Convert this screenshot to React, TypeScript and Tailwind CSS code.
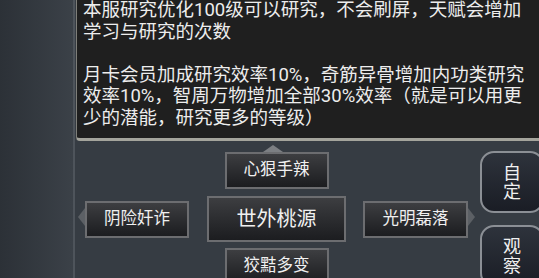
import React from "react";

const font = "font-['Roboto','Noto_Sans_CJK_SC',sans-serif]";

function Btn({ label, className = "" }: { label: string; className?: string }) {
  return (
    <div
      className={`relative flex items-center justify-center border-2 border-[#6c6d70] bg-gradient-to-b from-[#3d3e41] to-[#1c1d20] text-[#f0f0f0] ${className}`}
    >
      {label}
    </div>
  );
}

export default function App() {
  return (
    <div className={`w-[539px] h-[278px] flex overflow-hidden bg-[#363c43] ${font}`}>
      <div className="w-[73px] h-full shrink-0 bg-gradient-to-r from-[#2c3137] to-[#3b4148]" />
      <div className="w-[2px] h-full shrink-0 bg-[#4e545b]" />
      <div className="flex-1 flex flex-col min-w-0">
        <div className="ml-[1px] h-[141px] shrink-0 bg-[#1f1f1f] border-l border-[#7e7e79] border-b-[3px] border-b-[#a4a49c] rounded-bl-[4px] pl-[6px] text-[18.5px] leading-[21.5px] text-[#ededed] whitespace-nowrap">
          <div>本服研究优化100级可以研究，不会刷屏，天赋会增加</div>
          <div>学习与研究的次数</div>
          <div>&nbsp;</div>
          <div>月卡会员加成研究效率10%，奇筋异骨增加内功类研究</div>
          <div>效率10%，智周万物增加全部30%效率（就是可以用更</div>
          <div>少的潜能，研究更多的等级）</div>
        </div>
        <div className="flex-1 flex items-start min-h-0 overflow-hidden">
          <div className="relative ml-[10px] mt-[60px]">
            <div className="absolute left-[-7px] top-[7px] w-0 h-0 border-y-[9.5px] border-y-transparent border-r-[7px] border-r-[#5c6065]" />
            <Btn label="阴险奸诈" className="w-[104px] h-[37px] text-[16.5px]" />
          </div>
          <div className="ml-[18px] w-[139px] flex flex-col items-center pt-[11px] gap-[7px]">
            <div className="relative">
              <div className="absolute left-[38px] top-[-7px] w-0 h-0 border-x-[10px] border-x-transparent border-b-[7px] border-b-[#7c7f83]" />
              <Btn label="心狠手辣" className="w-[104px] h-[37px] text-[16.5px]" />
            </div>
            <Btn label="世外桃源" className="w-[139px] h-[46px] text-[20px]" />
            <Btn label="狡黠多变" className="w-[104px] h-[37px] text-[16.5px] -mt-[1px]" />
          </div>
          <div className="relative ml-[17px] mt-[60px]">
            <Btn label="光明磊落" className="w-[105px] h-[37px] text-[16.5px]" />
            <div className="absolute right-[-7px] top-[7px] w-0 h-0 border-y-[9.5px] border-y-transparent border-l-[7px] border-l-[#5c6065]" />
          </div>
          <div className="ml-[12px] mt-[10px] flex flex-col gap-[12px] shrink-0">
            <div className="w-[64px] h-[62px] rounded-[14px] border-2 border-[#8b8f95] bg-gradient-to-b from-[#2e333c] to-[#1a1d25] flex flex-col items-center justify-center text-[18px] leading-[19px] text-[#f0f0f0]">
              <span>自</span>
              <span>定</span>
            </div>
            <div className="w-[64px] h-[62px] rounded-[14px] border-2 border-[#8b8f95] bg-gradient-to-b from-[#2e333c] to-[#1a1d25] flex flex-col items-center justify-center text-[18px] leading-[19px] text-[#f0f0f0]">
              <span>观</span>
              <span>察</span>
            </div>
          </div>
        </div>
      </div>
    </div>
  );
}
